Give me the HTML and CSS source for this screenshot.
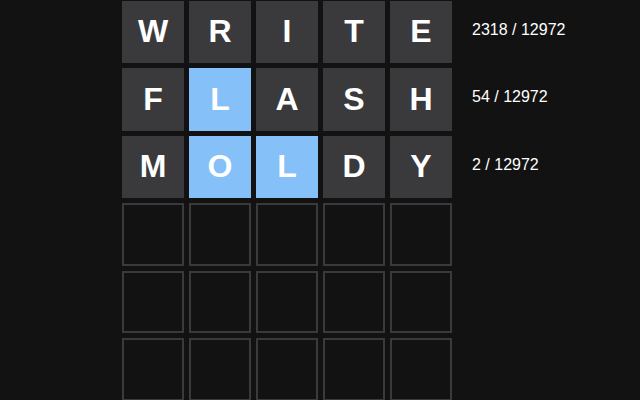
FILE: index.html
```html
<!DOCTYPE html>
<html>
<head>
<meta charset="utf-8">
<link rel="stylesheet" href="styles.css">
</head>
<body>
<div class="board">
  <div class="tile filled">W</div><div class="tile filled">R</div><div class="tile filled">I</div><div class="tile filled">T</div><div class="tile filled">E</div><div class="stat">2318 / 12972</div>
  <div class="tile filled">F</div><div class="tile blue">L</div><div class="tile filled">A</div><div class="tile filled">S</div><div class="tile filled">H</div><div class="stat">54 / 12972</div>
  <div class="tile filled">M</div><div class="tile blue">O</div><div class="tile blue">L</div><div class="tile filled">D</div><div class="tile filled">Y</div><div class="stat">2 / 12972</div>
  <div class="tile empty"></div><div class="tile empty"></div><div class="tile empty"></div><div class="tile empty"></div><div class="tile empty"></div><div class="stat"></div>
  <div class="tile empty"></div><div class="tile empty"></div><div class="tile empty"></div><div class="tile empty"></div><div class="tile empty"></div><div class="stat"></div>
  <div class="tile empty"></div><div class="tile empty"></div><div class="tile empty"></div><div class="tile empty"></div><div class="tile empty"></div><div class="stat"></div>
</div>
</body>
</html>
```
FILE: styles.css
```css
html, body {
  margin: 0;
  padding: 0;
  background: #121212;
  height: 100%;
  overflow: hidden;
}
body {
  font-family: "Liberation Sans", Arial, sans-serif;
  color: #ffffff;
}
.board {
  display: grid;
  grid-template-columns: repeat(5, 62px) auto;
  grid-auto-rows: 62.5px;
  column-gap: 5px;
  row-gap: 5px;
  padding-left: 122px;
  padding-top: 0.5px;
}
.tile {
  box-sizing: border-box;
  display: flex;
  align-items: center;
  justify-content: center;
  font-size: 32px;
  font-weight: bold;
  color: #ffffff;
}
.filled {
  background: #3a3a3c;
}
.blue {
  background: #85c0f9;
}
.empty {
  border: 2px solid #3a3a3c;
}
.stat {
  display: flex;
  align-items: center;
  padding-left: 15px;
  padding-bottom: 4px;
  font-size: 16px;
  white-space: nowrap;
}
```
